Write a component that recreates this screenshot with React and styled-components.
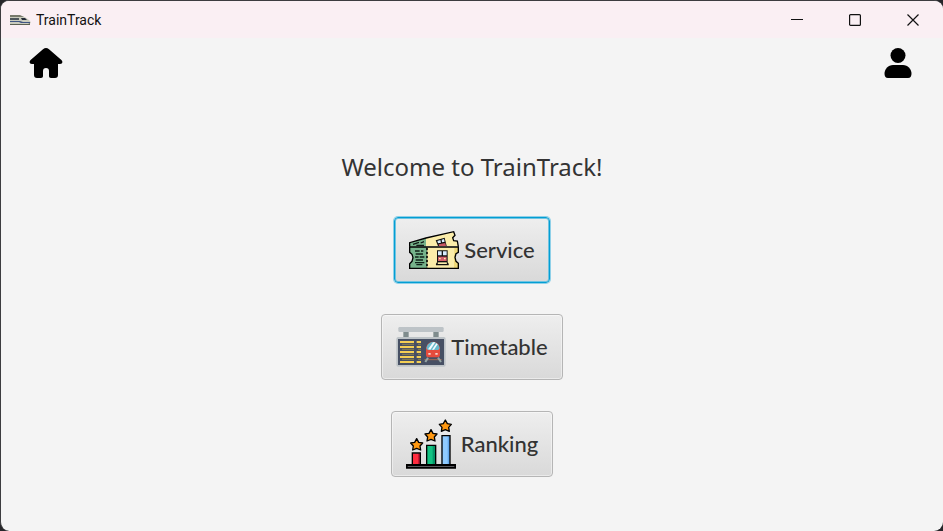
import React from "react";
import styled, { createGlobalStyle } from "styled-components";

const GlobalStyle = createGlobalStyle`
  * { box-sizing: border-box; }
  html, body { margin: 0; background: #26262a; }
`;

const Window = styled.div`
  display: flex;
  flex-direction: column;
  min-height: 100vh;
  border: 1px solid #3c3c3f;
  border-bottom: 0;
  border-right-width: 0;
  border-radius: 9px;
  overflow: hidden;
  background: #f4f4f4;
  color: #333333;
  font-family: "Noto Sans", "Open Sans", sans-serif;
`;

const TitleBar = styled.header`
  display: flex;
  align-items: center;
  height: 37px;
  padding: 0 1px 0 9px;
  background: #faeff3;
`;

const AppTitle = styled.span`
  flex: 1;
  margin-left: 5px;
  font-family: Roboto, "Open Sans", sans-serif;
  font-size: 14px;
  line-height: 20px;
  color: #111111;
`;

const CaptionButton = styled.button`
  display: flex;
  align-items: center;
  justify-content: center;
  width: 58px;
  height: 36px;
  padding: 0;
  border: 0;
  background: transparent;
  color: #111111;
`;

const NavBar = styled.nav`
  display: flex;
  justify-content: space-between;
  padding: 8px 28px 0 25px;
`;

const NavButton = styled.button`
  display: flex;
  align-items: center;
  justify-content: center;
  height: 34px;
  padding: 0 3px;
  border: 0;
  background: transparent;
  color: #000000;
`;

const Content = styled.main`
  display: flex;
  flex-direction: column;
  align-items: center;
  padding: 69px 16px 40px;
`;

const Heading = styled.h1`
  margin: 0;
  font-size: 24px;
  font-weight: 400;
  line-height: 36px;
`;

const Menu = styled.div`
  display: flex;
  flex-direction: column;
  align-items: center;
  gap: 31px;
  margin-top: 32px;
`;

const MenuButton = styled.button`
  display: flex;
  align-items: center;
  gap: 5px;
  height: 66px;
  padding: 0 14px;
  border: 1px solid #b5b5b5;
  border-radius: 4px;
  background: linear-gradient(#eeeeee, #d9d9d9);
  box-shadow: inset 0 0 0 1px rgba(255, 255, 255, 0.45);
  color: #333333;
  font-family: Lato, "Open Sans", sans-serif;
  font-size: 22px;
  font-weight: 500;
  line-height: 28px;

  &:focus {
    outline: 0;
    border-color: #039ed3;
    box-shadow: 0 0 0 1px #8fd0e8, inset 0 0 0 1px #6fc4e2;
  }
`;

const ButtonLabel = styled.span`
  padding-bottom: 1px;
`;

const Glyph = styled.svg`
  display: block;
  flex: none;
`;

function TrainLogo() {
  return (
    <Glyph width="21" height="12" viewBox="0 0 21 12" aria-hidden="true">
      <path d="M0 2H10C14 2 17 4 20 7L21 9L18 10H0Z" fill="#c9cbbd" />
      <path d="M0 1H10L14 3H0Z" fill="#77796b" />
      <path d="M0 4H9V6H0Z" fill="#4e565c" />
      <path d="M11 4H15L17 6H12Z" fill="#252b38" />
      <path d="M0 7H10L13 8L20 8V9H11L9 8H0Z" fill="#405582" />
      <path d="M0 10H18L20 9V11H0Z" fill="#5b6052" />
    </Glyph>
  );
}

function HomeIcon() {
  return (
    <Glyph width="34" height="32" viewBox="0 0 34 32" aria-hidden="true">
      <path
        d="M17 1C18 1 19 1.4 20 2.2L32.4 13C34.2 14.8 33.4 17 31 17H29V28C29 30 28 31 26 31H22C20.7 31 20 30.3 20 29V24C20 22 19 21 17 21S14 22 14 24V29C14 30.3 13.3 31 12 31H8C6 31 5 30 5 28V17H3C.6 17-.2 14.8 1.6 13L14 2.2C15 1.4 16 1 17 1Z"
        fill="currentColor"
      />
    </Glyph>
  );
}

function UserIcon() {
  return (
    <Glyph width="28" height="32" viewBox="0 0 28 32" aria-hidden="true">
      <circle cx="14" cy="8.5" r="7.5" fill="currentColor" />
      <path d="M9 18H19C24 18 27 22 27.5 26C27.7 29 26.5 31 24 31H4C1.5 31 .3 29 .5 26C1 22 4 18 9 18Z" fill="currentColor" />
    </Glyph>
  );
}

function TicketsIcon() {
  return (
    <Glyph width="50" height="50" viewBox="0 0 150 150" aria-hidden="true">
      <path d="M3 65V53L51 40V65Z" fill="#76b38b" />
      <path d="M51 40L134 20L138 31L132 39L135 47L143 48L149 64H51Z" fill="#fbedaa" />
      <path d="M2 65V53L51 39L134 20L138 31L131 38L134 47L145 48L148 65" fill="none" stroke="#000" strokeWidth="4" />
      <path d="M12 58L30 52M22 61H45M35 54L45 50" stroke="#101815" strokeWidth="4" />
      <path d="M80 46L107 38L113 63H87Z" fill="#101010" />
      <path d="M85 48L94 45L96 53L87 55ZM98 44L105 42L107 50L99 52Z" fill="#d9edff" />
      <path d="M89 58L109 54L111 63H90Z" fill="#c85864" />
      <path d="M2 66H54V130H2V116L8 109L11 99L8 89L2 82Z" fill="#76b38b" />
      <path d="M54 66H148V82L142 85L138 97L142 109L148 115V130H54Z" fill="#fbedaa" />
      <path d="M136 68H148V81L141 84L137 97L141 110L148 116V129H135Z" fill="#efd979" />
      <path d="M2 66H148V82L141 86L138 97L141 109L148 115V130H2V116L9 109L12 98L9 88L2 82Z" fill="none" stroke="#000" strokeWidth="4" />
      <path d="M54 68V130" stroke="#000" strokeWidth="5" strokeDasharray="8 4" />
      <path d="M18 78H32M36 78H43M20 87H42M18 96H29M32 96H46M20 105H42M18 113H46M22 119H40" stroke="#102219" strokeWidth="4" />
      <path d="M84 76H116V112H84Z" fill="#131313" />
      <path d="M87 79H98V91H87ZM102 79H113V91H102Z" fill="#d9edff" />
      <path d="M87 95H113V108H87Z" fill="#d45f6b" />
      <path d="M90 99H95V103H90ZM105 99H110V103H105Z" fill="#fff1ae" />
      <path d="M81 119H119M86 112L82 119M114 112L118 119" stroke="#111" strokeWidth="4" />
    </Glyph>
  );
}

function BoardIcon() {
  return (
    <Glyph width="50" height="50" viewBox="0 0 150 150" aria-hidden="true">
      <path d="M22 28H38V48H22ZM112 28H128V48H112Z" fill="#7f8c8d" />
      <rect x="7" y="15" width="136" height="15" rx="4" fill="#bdc3c7" />
      <rect x="1" y="45" width="148" height="89" rx="6" fill="#bdc3c7" />
      <path d="M6 51H144V129H6Z" fill="#475064" />
      <path d="M12 60H54M12 75H54M12 90H54M12 105H54M12 120H54M62 60H75M62 75H75M62 90H75M62 105H75M62 120H75" stroke="#f3cf55" strokeWidth="6" />
      <path d="M18 67H54M18 82H54M18 97H54M18 112H54M66 67H75M66 82H75M66 97H75M66 112H75" stroke="#87804f" strokeWidth="3" />
      <path d="M85 113H137" stroke="#a56a51" strokeWidth="3" />
      <path d="M96 107L88 120M126 107L135 120" stroke="#95a5a5" strokeWidth="6" />
      <path d="M90 81C91 68 99 59 111 59S131 68 132 81V99Q132 106 125 106H97Q90 106 90 99Z" fill="#e64c3c" />
      <path d="M91 79C93 67 101 60 111 60S129 67 131 79L127 84H95Z" fill="#67b9cc" />
      <path d="M96 82L111 61H118L103 83ZM108 83L121 64L125 67L114 83Z" fill="#f3fbfd" />
      <path d="M97 93H104V98H97ZM118 93H125V98H118Z" fill="#f8d6cf" />
    </Glyph>
  );
}

function Star({ cx, cy }) {
  return (
    <path
      transform={`translate(${cx} ${cy})`}
      d="M0-17L6-6L18-4L10 5L12 17L0 12L-12 17L-10 5L-18-4L-6-6Z"
      fill="#ff9811"
      stroke="#000"
      strokeWidth="4"
      strokeLinejoin="round"
    />
  );
}

function RankingIcon() {
  return (
    <Glyph width="50" height="50" viewBox="0 0 150 150" aria-hidden="true">
      <path d="M19 103H43V136H19Z" fill="#ff2d3f" />
      <path d="M36 104H43V136H36Z" fill="#ca1835" />
      <path d="M62 80H88V136H62Z" fill="#13c282" />
      <path d="M80 80H88V136H80Z" fill="#059467" />
      <path d="M107 51H132V136H107Z" fill="#8fcbff" />
      <path d="M125 51H132V136H125Z" fill="#65a9ed" />
      <path d="M19 136V102H43V136M62 136V79H89V136M108 136V50H132V136" fill="none" stroke="#000" strokeWidth="4" />
      <path d="M0 135H150V149H0Z" fill="#000" />
      <path d="M5 141H145V144H5Z" fill="#5b5b60" />
      <Star cx={32} cy={76} />
      <Star cx={75} cy={49} />
      <Star cx={118} cy={20} />
    </Glyph>
  );
}

const destinations = [
  { label: "Service", Icon: TicketsIcon },
  { label: "Timetable", Icon: BoardIcon },
  { label: "Ranking", Icon: RankingIcon },
];

export default function App() {
  return (
    <>
      <GlobalStyle />
      <Window>
        <TitleBar>
          <TrainLogo />
          <AppTitle>TrainTrack</AppTitle>
          <CaptionButton aria-label="Minimize">
            <Glyph width="12" height="12" viewBox="0 0 12 12" shapeRendering="crispEdges">
              <path d="M0 5H12V6H0Z" fill="currentColor" />
            </Glyph>
          </CaptionButton>
          <CaptionButton aria-label="Maximize">
            <Glyph width="12" height="12" viewBox="0 0 12 12">
              <rect x=".6" y=".6" width="10.8" height="10.8" rx="1" fill="none" stroke="currentColor" strokeWidth="1.2" />
            </Glyph>
          </CaptionButton>
          <CaptionButton aria-label="Close">
            <Glyph width="12" height="12" viewBox="0 0 12 12">
              <path d="M.5 .5L11.5 11.5M11.5 .5L.5 11.5" stroke="currentColor" strokeWidth="1.2" />
            </Glyph>
          </CaptionButton>
        </TitleBar>
        <NavBar>
          <NavButton aria-label="Home"><HomeIcon /></NavButton>
          <NavButton aria-label="Account"><UserIcon /></NavButton>
        </NavBar>
        <Content>
          <Heading>Welcome to TrainTrack!</Heading>
          <Menu>
            {destinations.map(({ label, Icon }, index) => (
              <MenuButton key={label} autoFocus={index === 0}>
                <Icon />
                <ButtonLabel>{label}</ButtonLabel>
              </MenuButton>
            ))}
          </Menu>
        </Content>
      </Window>
    </>
  );
}
